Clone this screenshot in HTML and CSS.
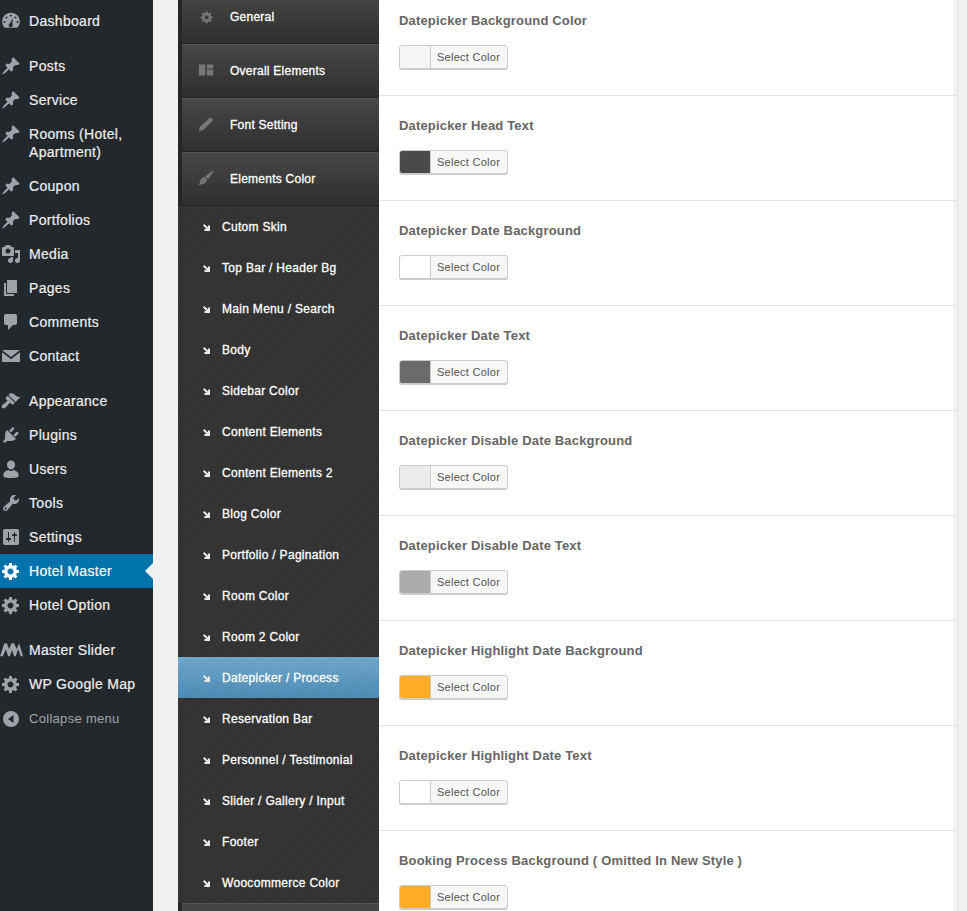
FILE: index.html
```html
<!DOCTYPE html>
<html lang="en">

<head>
    <meta charset="UTF-8">
    <meta name="viewport" content="width=device-width, initial-scale=1.0">
    <title>Hotel Master</title>
    <link rel="stylesheet" href="styles.css">
</head>

<body>
    <svg class="sprites" width="0" height="0">
        <symbol id="i-dash" viewBox="0 0 20 20"><path d="M3.800 16.800C2.100 15.200 1.200 12.900 1.200 10.500 1.200 5.600 5.100 1.800 10 1.800s8.800 3.800 8.800 8.700c0 2.400-.9 4.700-2.600 6.300zM10 3.500a1 1 0 1 0 0 2 1 1 0 0 0 0-2zM5.500 5.500a1 1 0 1 0 0 2 1 1 0 0 0 0-2zm9 0a1 1 0 1 0 0 2 1 1 0 0 0 0-2zM3.500 10a1 1 0 1 0 0 2 1 1 0 0 0 0-2zm13 0a1 1 0 1 0 0 2 1 1 0 0 0 0-2zM12 7l-2.900 5.300a2 2 0 1 0 2.300.8z" fill-rule="evenodd"/></symbol>
        <symbol id="i-pin" viewBox="0 0 20 20"><path d="M10.440 3.020l1.820-1.820 6.360 6.350-1.830 1.820c-1.050-.68-2.480-.57-3.410.36l-.75.75c-.92.93-1.040 2.350-.35 3.410l-1.830 1.820-2.410-2.410-2.800 2.790c-.42.42-3.380 2.710-3.800 2.290s1.860-3.390 2.280-3.810l2.790-2.790L4.100 9.360l1.830-1.820c1.050.69 2.480.57 3.400-.36l.75-.75c.93-.92 1.050-2.350.36-3.410z"/></symbol>
        <symbol id="i-media" viewBox="0 0 20 20"><path d="M13 11V4c0-.55-.45-1-1-1h-1.670L9 1H5L3.670 3H2c-.55 0-1 .45-1 1v7c0 .55.45 1 1 1h10c.55 0 1-.45 1-1zM7 4.500c1.380 0 2.500 1.120 2.500 2.500S8.380 9.500 7 9.500 4.500 8.380 4.500 7 5.620 4.500 7 4.500zM14 6h5v10.500c0 1.380-1.120 2.500-2.500 2.500S14 17.880 14 16.500s1.120-2.500 2.500-2.500c.17 0 .34.020.5.050V9h-3V6zm-4 8.050V13h2v3.500c0 1.380-1.120 2.500-2.500 2.500S7 17.880 7 16.500 8.120 14 9.500 14c.17 0 .34.020.5.050z"/></symbol>
        <symbol id="i-pages" viewBox="0 0 20 20"><path d="M6 15V2h10v13H6zm-1 1h8v2H3V5h2v11z"/></symbol>
        <symbol id="i-comment" viewBox="0 0 20 20"><path d="M5 2h9c1.100 0 2 .9 2 2v7c0 1.100-.9 2-2 2h-2l-5 5v-5H5c-1.100 0-2-.9-2-2V4c0-1.100.9-2 2-2z"/></symbol>
        <symbol id="i-mail" viewBox="0 0 20 20"><path d="M1 4h18L10 11zM1 6.200V16h18V6.200l-9 7z"/></symbol>
        <symbol id="i-brush" viewBox="0 0 20 20"><path d="M14.480 11.060L7.410 3.990l1.500-1.500c.5-.56 2.300-.47 3.510.32 1.210.8 1.430 1.280 2.910 2.100 1.180.64 2.450 1.260 4.450.85zm-.71.71L6.700 4.700 4.930 6.470c-.39.39-.39 1.020 0 1.410l1.060 1.060c.39.39.39 1.030 0 1.420-.6.6-1.430 1.110-2.210 1.690-.35.26-.7.53-1.010.84C1.430 13.230 0 15.860 1.070 16.930c1.080 1.070 3.700-.36 4.770-1.430.31-.31.58-.66.84-1.010.58-.78 1.090-1.610 1.690-2.210.39-.39 1.030-.39 1.420 0l1.060 1.060c.39.39 1.020.39 1.410 0z"/></symbol>
        <symbol id="i-paint" viewBox="0 0 20 20"><path d="M18.500 1 19.500 2 12.500 11.500 8.800 7.800z"/><path d="M8 8.800 11.500 12.300c-.5 2.700-3 4.700-5.500 5.200L.5 19c1.500-1.500 1.800-3.200 2.300-5.300.6-2.700 2.700-4.500 5.200-4.900z"/></symbol>
        <symbol id="i-plug" viewBox="0 0 20 20"><path d="M13.110 4.360L9.870 7.600 8 5.730l3.240-3.240c.35-.34 1.050-.2 1.560.32.52.51.66 1.210.31 1.550zm-8 1.770l.91-1.120 9.010 9.010-1.190.84c-.71.71-2.630 1.160-3.820 1.160H6.140L4.900 17.260c-.59.59-1.540.59-2.120 0-.59-.58-.59-1.530 0-2.120l1.240-1.240v-3.880c0-1.130.4-3.190 1.090-3.890zm7.260 3.970l3.240-3.240c.34-.35 1.040-.21 1.550.31.52.51.66 1.210.31 1.550l-3.240 3.250z"/></symbol>
        <symbol id="i-user" viewBox="0 0 20 20"><path d="M10 1.500a4 4 0 0 1 4 4.300c0 2.500-1.700 4.700-4 4.700S6 8.300 6 5.800a4 4 0 0 1 4-4.300zM2.500 15.200c0-2.300 3-3.700 5-4.200.7.600 1.600 1 2.500 1s1.800-.4 2.500-1c2 .5 5 1.900 5 4.200v2.500c-2 1-5 1.300-7.500 1.300s-5.500-.3-7.500-1.300z"/></symbol>
        <symbol id="i-wrench" viewBox="0 0 20 20"><path d="M16.680 9.770c-1.340 1.340-3.300 1.670-4.950.99l-5.410 6.520c-.99.99-2.590.99-3.570 0-.99-.98-.99-2.580 0-3.570l6.520-5.420c-.68-1.650-.35-3.610.99-4.950 1.280-1.280 3.120-1.620 4.720-1.060l-2.890 2.890 2.820 2.820 2.860-2.870c.53 1.580.18 3.400-1.090 4.670zM3.810 16.210c.4.39 1.030.39 1.420 0 .4-.4.4-1.030 0-1.430-.39-.39-1.020-.39-1.420 0-.39.4-.39 1.030 0 1.430z"/></symbol>
        <symbol id="i-settings" viewBox="0 0 20 20"><path d="M18 16V4c0-1.100-.9-2-2-2H4c-1.100 0-2 .9-2 2v12c0 1.100.9 2 2 2h12c1.100 0 2-.9 2-2zM8 11h1c.55 0 1 .45 1 1s-.45 1-1 1H8v1.500c0 .28-.22.5-.5.5s-.5-.22-.5-.5V13H6c-.55 0-1-.45-1-1s.45-1 1-1h1V5.500c0-.28.22-.5.5-.5s.5.22.5.5V11zm5-2h-1c-.55 0-1-.45-1-1s.45-1 1-1h1V5.500c0-.28.22-.5.5-.5s.5.22.5.5V7h1c.55 0 1 .45 1 1s-.45 1-1 1h-1v5.500c0 .28-.22.5-.5.5s-.5-.22-.5-.5V9z"/></symbol>
        <symbol id="i-gear" viewBox="0 0 20 20"><path d="M18 12h-2.180c-.17.7-.44 1.350-.81 1.930l1.540 1.540-2.100 2.100-1.540-1.540c-.58.36-1.230.64-1.910.81V19H8v-2.180c-.68-.17-1.330-.45-1.910-.81l-1.540 1.540-2.120-2.120 1.540-1.540c-.36-.58-.64-1.230-.8-1.890H1V9h2.180c.17-.7.44-1.350.81-1.930L2.450 5.530l2.100-2.100 1.540 1.540c.58-.36 1.230-.64 1.910-.81V2h3v2.180c.68.17 1.330.45 1.910.81l1.540-1.540 2.120 2.120-1.540 1.540c.36.58.64 1.230.8 1.890H18v3zm-8.500 1.500c1.660 0 3-1.340 3-3s-1.340-3-3-3-3 1.340-3 3 1.340 3 3 3z"/></symbol>
        <symbol id="i-slider" viewBox="0 0 24 20"><path d="M0 16.500 4.500 3h2.600L9.500 9l2.500-6h2.600l2.800 6L20 3l4 13.500h-2.500L19 9l-2.500 7.500h-1.800L12.500 10l-2.200 6.500H8.500L6 9.500 3 16.500z"/></symbol>
        <symbol id="i-collapse" viewBox="0 0 20 20"><path d="M10 2a8 8 0 1 1 0 16 8 8 0 0 1 0-16zm2.500 4-5.500 4 5.500 4z" fill-rule="evenodd"/></symbol>
        <symbol id="i-layout" viewBox="0 0 20 20"><path d="M1 3h8v14H1zM11 3h8v5h-8zM11 9.500h8V17h-8z"/></symbol>
        <symbol id="i-pencil" viewBox="0 0 20 20"><path d="M15.500 1.500 19 5 6.500 17.500 1 19l1.500-5.500z"/></symbol>
        <symbol id="i-arrow" viewBox="0 0 10 10"><path d="M0 2 2 0 7 5V2h3v8H2V7h3z"/></symbol>
    </svg>

    <div class="page">
        <nav class="adminmenu">
            <a class="menu-item"><svg class="menu-icon"><use href="#i-dash"/></svg>Dashboard</a>
            <div class="menu-sep"></div>
            <a class="menu-item"><svg class="menu-icon"><use href="#i-pin"/></svg>Posts</a>
            <a class="menu-item"><svg class="menu-icon"><use href="#i-pin"/></svg>Service</a>
            <a class="menu-item"><svg class="menu-icon"><use href="#i-pin"/></svg>Rooms (Hotel, Apartment)</a>
            <a class="menu-item"><svg class="menu-icon"><use href="#i-pin"/></svg>Coupon</a>
            <a class="menu-item"><svg class="menu-icon"><use href="#i-pin"/></svg>Portfolios</a>
            <a class="menu-item"><svg class="menu-icon"><use href="#i-media"/></svg>Media</a>
            <a class="menu-item"><svg class="menu-icon"><use href="#i-pages"/></svg>Pages</a>
            <a class="menu-item"><svg class="menu-icon"><use href="#i-comment"/></svg>Comments</a>
            <a class="menu-item"><svg class="menu-icon"><use href="#i-mail"/></svg>Contact</a>
            <div class="menu-sep"></div>
            <a class="menu-item"><svg class="menu-icon"><use href="#i-brush"/></svg>Appearance</a>
            <a class="menu-item"><svg class="menu-icon"><use href="#i-plug"/></svg>Plugins</a>
            <a class="menu-item"><svg class="menu-icon"><use href="#i-user"/></svg>Users</a>
            <a class="menu-item"><svg class="menu-icon"><use href="#i-wrench"/></svg>Tools</a>
            <a class="menu-item"><svg class="menu-icon"><use href="#i-settings"/></svg>Settings</a>
            <a class="menu-item current"><svg class="menu-icon"><use href="#i-gear"/></svg>Hotel Master</a>
            <a class="menu-item"><svg class="menu-icon"><use href="#i-gear"/></svg>Hotel Option</a>
            <div class="menu-sep"></div>
            <a class="menu-item"><svg class="menu-icon wide"><use href="#i-slider"/></svg>Master Slider</a>
            <a class="menu-item"><svg class="menu-icon"><use href="#i-gear"/></svg>WP Google Map</a>
            <a class="menu-item collapse"><svg class="menu-icon"><use href="#i-collapse"/></svg>Collapse menu</a>
        </nav>

        <div class="panel">
            <aside class="tabs">
                <div class="tab"><svg class="tab-icon small"><use href="#i-gear"/></svg>General</div>
                <div class="tab"><svg class="tab-icon"><use href="#i-layout"/></svg>Overall Elements</div>
                <div class="tab"><svg class="tab-icon"><use href="#i-pencil"/></svg>Font Setting</div>
                <div class="tab"><svg class="tab-icon"><use href="#i-paint"/></svg>Elements Color</div>
                <ul class="subtabs">
                    <li><svg class="sub-icon"><use href="#i-arrow"/></svg>Cutom Skin</li>
                    <li><svg class="sub-icon"><use href="#i-arrow"/></svg>Top Bar / Header Bg</li>
                    <li><svg class="sub-icon"><use href="#i-arrow"/></svg>Main Menu / Search</li>
                    <li><svg class="sub-icon"><use href="#i-arrow"/></svg>Body</li>
                    <li><svg class="sub-icon"><use href="#i-arrow"/></svg>Sidebar Color</li>
                    <li><svg class="sub-icon"><use href="#i-arrow"/></svg>Content Elements</li>
                    <li><svg class="sub-icon"><use href="#i-arrow"/></svg>Content Elements 2</li>
                    <li><svg class="sub-icon"><use href="#i-arrow"/></svg>Blog Color</li>
                    <li><svg class="sub-icon"><use href="#i-arrow"/></svg>Portfolio / Pagination</li>
                    <li><svg class="sub-icon"><use href="#i-arrow"/></svg>Room Color</li>
                    <li><svg class="sub-icon"><use href="#i-arrow"/></svg>Room 2 Color</li>
                    <li class="active"><svg class="sub-icon"><use href="#i-arrow"/></svg>Datepicker / Process</li>
                    <li><svg class="sub-icon"><use href="#i-arrow"/></svg>Reservation Bar</li>
                    <li><svg class="sub-icon"><use href="#i-arrow"/></svg>Personnel / Testimonial</li>
                    <li><svg class="sub-icon"><use href="#i-arrow"/></svg>Slider / Gallery / Input</li>
                    <li><svg class="sub-icon"><use href="#i-arrow"/></svg>Footer</li>
                    <li><svg class="sub-icon"><use href="#i-arrow"/></svg>Woocommerce Color</li>
                </ul>
                <div class="tab"></div>
            </aside>

            <main class="options">
                <section class="option">
                    <h4>Datepicker Background Color</h4>
                    <button class="color-btn"><span class="swatch c-f5"></span><span class="btn-text">Select Color</span></button>
                </section>
                <section class="option">
                    <h4>Datepicker Head Text</h4>
                    <button class="color-btn"><span class="swatch c-4a"></span><span class="btn-text">Select Color</span></button>
                </section>
                <section class="option">
                    <h4>Datepicker Date Background</h4>
                    <button class="color-btn"><span class="swatch c-ff"></span><span class="btn-text">Select Color</span></button>
                </section>
                <section class="option">
                    <h4>Datepicker Date Text</h4>
                    <button class="color-btn"><span class="swatch c-6b"></span><span class="btn-text">Select Color</span></button>
                </section>
                <section class="option">
                    <h4>Datepicker Disable Date Background</h4>
                    <button class="color-btn"><span class="swatch c-eb"></span><span class="btn-text">Select Color</span></button>
                </section>
                <section class="option">
                    <h4>Datepicker Disable Date Text</h4>
                    <button class="color-btn"><span class="swatch c-ab"></span><span class="btn-text">Select Color</span></button>
                </section>
                <section class="option">
                    <h4>Datepicker Highlight Date Background</h4>
                    <button class="color-btn"><span class="swatch c-or"></span><span class="btn-text">Select Color</span></button>
                </section>
                <section class="option">
                    <h4>Datepicker Highlight Date Text</h4>
                    <button class="color-btn"><span class="swatch c-ff"></span><span class="btn-text">Select Color</span></button>
                </section>
                <section class="option">
                    <h4>Booking Process Background ( Omitted In New Style )</h4>
                    <button class="color-btn"><span class="swatch c-or"></span><span class="btn-text">Select Color</span></button>
                </section>
            </main>
        </div>
    </div>
</body>

</html>
```

FILE: styles.css
```css
html,
body {
    margin: 0;
    height: 911px;
    overflow: hidden;
    background-color: #f1f1f1;
    font-family: "Liberation Sans", Arial, sans-serif;
}

.sprites {
    display: none;
}

.page {
    display: flex;
    height: 911px;
}

/* left admin menu */
.adminmenu {
    width: 153px;
    flex: none;
    box-sizing: border-box;
    padding-top: 4px;
    background-color: #23282d;
}

.menu-item {
    display: block;
    position: relative;
    padding: 8px 8px 8px 29px;
    font-size: 14px;
    line-height: 18px;
    letter-spacing: 0.3px;
    color: #eeeeee;
    -webkit-text-stroke: 0.2px #eeeeee;
}

.menu-sep {
    height: 11px;
}

.menu-icon {
    position: absolute;
    left: 1px;
    top: 7px;
    width: 20px;
    height: 20px;
    fill: #9ea3a8;
    stroke: none;
}

.menu-icon.wide {
    left: 0;
    width: 23px;
}

.menu-item.current {
    background-color: #0073aa;
    color: #ffffff;
}

.menu-item.current .menu-icon {
    fill: #ffffff;
}

.menu-item.current::after {
    content: "";
    position: absolute;
    right: 0;
    top: 9px;
    border: 8px solid transparent;
    border-left-width: 0;
    border-right-color: #f1f1f1;
}

.menu-item.collapse {
    margin-top: 1px;
    font-size: 13px;
    color: #a0a5aa;
    -webkit-text-stroke: 0;
}

/* plugin option panel */
.panel {
    display: flex;
    width: 779px;
    margin-left: 25px;
    flex: none;
}

.tabs {
    width: 201px;
    flex: none;
    background-color: #262626;
    overflow: hidden;
    margin-top: -11px;
}

.tab {
    display: flex;
    align-items: center;
    position: relative;
    height: 52px;
    margin-left: 4px;
    padding-left: 48px;
    border-top: 1px solid #565656;
    border-bottom: 1px solid #222222;
    background: linear-gradient(#474747, #2f2f2f);
    font-size: 12px;
    letter-spacing: 0.25px;
    color: #ffffff;
    -webkit-text-stroke: 0.3px #ffffff;
}

.tab:first-child {
    height: 53px;
}

.tab-icon {
    position: absolute;
    left: 16px;
    top: 17px;
    width: 16px;
    height: 16px;
    fill: #777777;
    stroke: none;
}

.tab-icon.small {
    left: 18px;
    top: 20px;
    width: 14px;
    height: 14px;
}

.subtabs {
    list-style: none;
    margin: 0;
    padding: 0;
    background-color: #333333;
    background-image: repeating-linear-gradient(135deg, #313131 0 1px, #353535 1px 3px);
}

.subtabs li {
    display: flex;
    align-items: center;
    position: relative;
    height: 41px;
    padding-left: 44px;
    font-size: 12px;
    letter-spacing: 0.3px;
    color: #ffffff;
    -webkit-text-stroke: 0.3px #ffffff;
}

.subtabs li.active {
    background: repeating-linear-gradient(135deg, rgba(0, 0, 0, 0.03) 0 1px, rgba(255, 255, 255, 0.03) 1px 3px), linear-gradient(#6ea6cc, #4a8ab4);
}

.sub-icon {
    position: absolute;
    left: 25px;
    top: 18px;
    width: 7px;
    height: 7px;
    fill: #e8e8e8;
    stroke: none;
}

.options {
    width: 578px;
    flex: none;
    border-right: 1px solid #e4e4e4;
    background: linear-gradient(90deg, #ffffff 574px, #f4f4f4 574px);
}

.option {
    box-sizing: border-box;
    height: 105px;
    padding: 22px 20px 0;
    border-bottom: 1px solid #e5e5e5;
}

.option:first-child {
    height: 96px;
    padding-top: 13px;
}

.option h4 {
    margin: 0 0 16px;
    font-size: 13px;
    line-height: 16px;
    font-weight: bold;
    letter-spacing: 0.17px;
    color: #666666;
}

.color-btn {
    display: flex;
    align-items: stretch;
    height: 24px;
    padding: 0;
    border: 1px solid #cccccc;
    border-radius: 3px;
    box-shadow: 0 1px 0 #cccccc;
    background-color: #f7f7f7;
    overflow: hidden;
}

.swatch {
    width: 30px;
    border-right: 1px solid #cccccc;
}

.btn-text {
    padding: 0 7px 0 6px;
    font-family: "Liberation Sans", Arial, sans-serif;
    font-size: 11px;
    line-height: 22px;
    letter-spacing: 0.27px;
    color: #555555;
}

.c-f5 { background-color: #f5f5f5; }
.c-4a { background-color: #4a4a4a; }
.c-ff { background-color: #ffffff; }
.c-6b { background-color: #6b6b6b; }
.c-eb { background-color: #ebebeb; }
.c-ab { background-color: #ababab; }
.c-or { background-color: #ffac27; }
```
